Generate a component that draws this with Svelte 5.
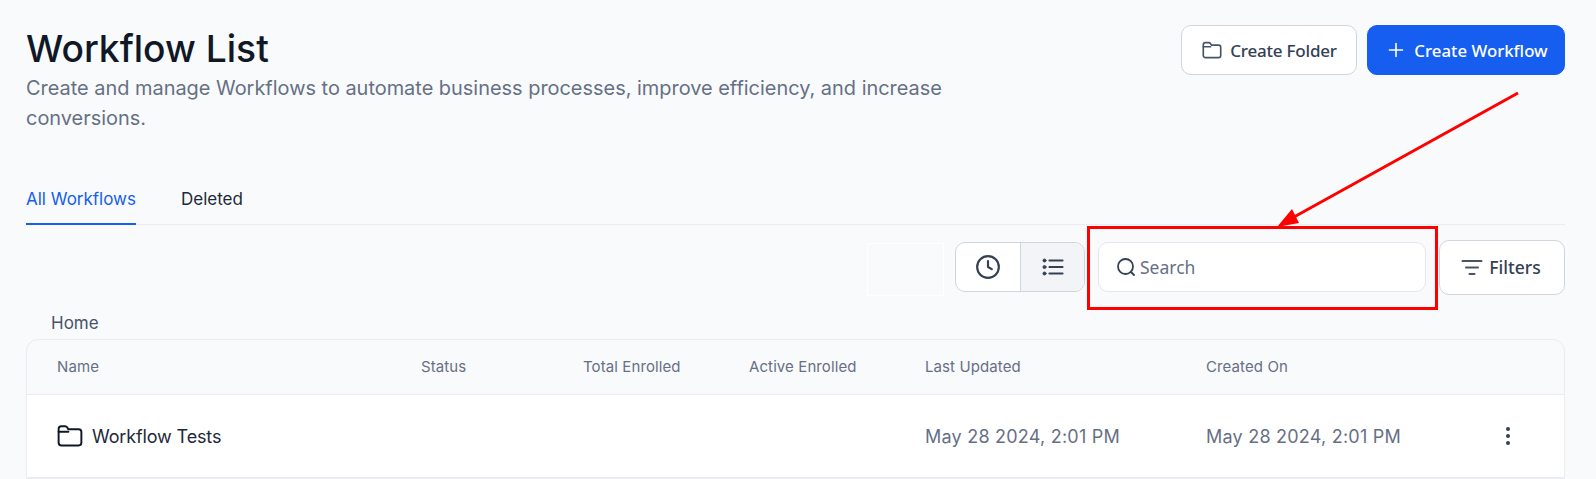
<script>
  const columns = [
    { label: 'Name' },
    { label: 'Status' },
    { label: 'Total Enrolled' },
    { label: 'Active Enrolled' },
    { label: 'Last Updated' },
    { label: 'Created On' },
    { label: '' }
  ];
</script>

<div class="page">
  <header class="head">
    <div class="intro">
      <h1>Workflow List</h1>
      <p>Create and manage Workflows to automate business processes, improve efficiency, and increase conversions.</p>
    </div>
    <div class="actions">
      <button class="btn folder">
        <svg width="22" height="22" viewBox="0 0 24 24" fill="none" stroke="#475467" stroke-width="1.800" stroke-linecap="round" stroke-linejoin="round"><path d="M2.500 6.500c0-1.400 1-2.500 2.400-2.500h3.600c.8 0 1.500.4 1.900 1l1 1.600h7.700c1.400 0 2.400 1.100 2.400 2.500v8.800c0 1.400-1 2.400-2.400 2.400H4.900c-1.400 0-2.400-1-2.400-2.400z"/><path d="M2.500 8.500h8"/></svg>
        Create Folder
      </button>
      <button class="btn primary">
        <svg width="20" height="20" viewBox="0 0 20 20" fill="none" stroke="#fff" stroke-width="1.600" stroke-linecap="round"><path d="M10 3.500v13M3.500 10h13"/></svg>
        Create Workflow
      </button>
    </div>
  </header>

  <nav class="tabs">
    <span class="tab active">All Workflows</span>
    <span class="tab">Deleted</span>
  </nav>

  <div class="toolbar">
    <div class="blank"></div>
    <div class="toggle">
      <span class="seg">
        <svg width="26" height="26" viewBox="0 0 24 24" fill="none" stroke="#344054" stroke-width="2" stroke-linecap="round" stroke-linejoin="round"><circle cx="12" cy="12" r="10"/><path d="M12 6.500V12l3.500 2"/></svg>
      </span>
      <span class="seg on">
        <svg class="listicon" width="24" height="24" viewBox="0 0 24 24" fill="none" stroke="#344054" stroke-width="2.200" stroke-linecap="round"><path d="M8.500 5.500h13M8.500 12h13M8.500 18.500h13"/><circle cx="3.500" cy="5.500" r="1.500" fill="#344054" stroke-width="1"/><circle cx="3.500" cy="12" r="1.500" fill="#344054" stroke-width="1"/><circle cx="3.500" cy="18.500" r="1.500" fill="#344054" stroke-width="1"/></svg>
      </span>
    </div>
    <label class="search">
      <svg width="20" height="20" viewBox="0 0 20 20" fill="none" stroke="#344054" stroke-width="1.800" stroke-linecap="round"><circle cx="9.500" cy="9.500" r="7.500"/><path d="M15 15l3 3"/></svg>
      <input placeholder="Search" />
    </label>
    <button class="btn filters">
      <svg width="24" height="24" viewBox="0 0 24 24" fill="none" stroke="#475467" stroke-width="2" stroke-linecap="round"><path d="M2.500 6h19M6 12.500h12M9.500 19h5"/></svg>
      Filters
    </button>
  </div>

  <div class="crumb">Home</div>

  <section class="table">
    <div class="row headrow">
      {#each columns as c}
        <div>{c.label}</div>
      {/each}
    </div>
    <div class="row body">
      <div class="namecell">
        <svg width="26" height="26" viewBox="0 0 24 24" fill="none" stroke="#101828" stroke-width="1.800" stroke-linecap="round" stroke-linejoin="round"><path d="M1.500 5.500C1.500 4 2.500 3 4 3h3.500c.8 0 1.500.4 1.900 1l1 1.800H20c1.500 0 2.500 1 2.500 2.500v10c0 1.400-1 2.400-2.500 2.400H4c-1.500 0-2.500-1-2.500-2.400z"/><path d="M1.500 8h9"/></svg>
        <span>Workflow Tests</span>
      </div>
      <div></div>
      <div></div>
      <div></div>
      <div class="date">May 28 2024, 2:01 PM</div>
      <div class="date">May 28 2024, 2:01 PM</div>
      <div class="kebab">
        <svg width="6" height="20" viewBox="0 0 6 20" fill="#344054"><circle cx="3" cy="3" r="2"/><circle cx="3" cy="10" r="2"/><circle cx="3" cy="17" r="2"/></svg>
      </div>
    </div>
  </section>

  <div class="redbox"></div>
  <svg class="arrow" width="1596" height="479" viewBox="0 0 1596 479">
    <line x1="1518" y1="93" x2="1294" y2="217" stroke="#ff0000" stroke-width="3"/>
    <polygon points="1277,227 1292,209 1299,223" fill="#ff0000"/>
  </svg>
</div>

<style>
  :global(body) {
    margin: 0;
    background: #f9fafb;
  }
  .page {
    position: relative;
    width: 1596px;
    height: 479px;
    overflow: hidden;
    box-sizing: border-box;
    padding: 25px 31px 0 26px;
    font-family: Inter, sans-serif;
    color: #101828;
  }
  .head {
    display: flex;
    justify-content: space-between;
    align-items: flex-start;
    height: 160px;
  }
  .intro {
    width: 950px;
  }
  h1 {
    margin: 0;
    padding-top: 1px;
    font-size: 37.200px;
    font-weight: 500;
    line-height: 46px;
  }
  p {
    margin: 1px 0 0;
    font-size: 19.930px;
    line-height: 30px;
    color: #667085;
  }
  .actions {
    display: flex;
    gap: 10px;
  }
  .btn {
    display: inline-flex;
    align-items: center;
    justify-content: center;
    gap: 8px;
    box-sizing: border-box;
    height: 50px;
    border-radius: 10px;
    border: 1px solid #d0d5dd;
    background: #fff;
    color: #344054;
    font-family: "Noto Sans", sans-serif;
    font-size: 17px;
    font-weight: 500;
  }
  .folder {
    width: 176px;
    letter-spacing: -0.2px;
    gap: 7px;
  }
  .primary {
    width: 198px;
    background: #155eef;
    border-color: #155eef;
    color: #fff;
    font-size: 16.800px;
    padding-left: 8px;
  }
  .tabs {
    display: flex;
    gap: 45px;
    height: 39px;
    border-bottom: 1px solid #eaecf0;
  }
  .tab {
    font-size: 17px;
    font-weight: 400;
    line-height: 28px;
    color: #1d2939;
    box-sizing: border-box;
    height: 40px;
  }
  .active {
    color: #155eef;
    border-bottom: 2px solid #155eef;
  }
  .toolbar {
    display: flex;
    align-items: center;
    height: 54px;
    margin-top: 15px;
    justify-content: flex-end;
  }
  .blank {
    box-sizing: border-box;
    width: 77px;
    height: 53px;
    border: 1px solid #fff;
    margin: 5px 11px 0 0;
  }
  .toggle {
    display: flex;
    box-sizing: border-box;
    width: 130px;
    height: 50px;
    border: 1px solid #d0d5dd;
    border-radius: 10px;
    background: #fff;
    overflow: hidden;
    margin-right: 13px;
  }
  .seg {
    flex: 1;
    display: flex;
    align-items: center;
    justify-content: center;
  }
  .seg.on {
    background: #f2f4f7;
    border-left: 1px solid #d0d5dd;
  }
  .listicon {
    margin-left: 2px;
  }
  .search {
    display: flex;
    align-items: center;
    gap: 4px;
    box-sizing: border-box;
    width: 328px;
    height: 50px;
    padding: 0 16px 0 17px;
    background: #fff;
    border: 1px solid #e4e7ec;
    border-radius: 10px;
    margin-right: 13px;
  }
  input {
    flex: 1;
    min-width: 0;
    border: 0;
    outline: 0;
    padding: 0;
    background: transparent;
    font-family: "Noto Sans", sans-serif;
    font-size: 17.500px;
  }
  input::placeholder {
    color: #667085;
    opacity: 1;
  }
  .filters {
    width: 126px;
    height: 55px;
    align-self: flex-start;
    font-size: 17.500px;
    gap: 5px;
    padding: 0 3px 2px 0;
  }
  .crumb {
    margin-top: 17px;
    padding-left: 25px;
    font-size: 17px;
    line-height: 24px;
    color: #475467;
  }
  .table {
    margin-top: 4px;
    border: 1px solid #eaecf0;
    border-radius: 12px 12px 0 0;
    overflow: hidden;
  }
  .row {
    display: grid;
    grid-template-columns: 364px 162px 166px 176px 281px 1fr 59px;
    align-items: center;
    padding-left: 30px;
  }
  .headrow {
    box-sizing: border-box;
    height: 55px;
    padding-bottom: 2px;
    font-size: 15px;
    font-weight: 400;
    letter-spacing: 0.1px;
    color: #667085;
    border-bottom: 1px solid #eaecf0;
  }
  .body {
    box-sizing: border-box;
    height: 84px;
    background: #fff;
    border-bottom: 2px solid #eaecf0;
    font-size: 18px;
  }
  .namecell {
    display: flex;
    align-items: center;
    gap: 9px;
    color: #1d2939;
    letter-spacing: -0.14px;
  }
  .date {
    color: #667085;
    letter-spacing: 0.23px;
  }
  .kebab {
    display: flex;
    align-items: center;
  }
  .redbox {
    position: absolute;
    left: 1087px;
    top: 226px;
    width: 351px;
    height: 84px;
    box-sizing: border-box;
    border: 3px solid #ff0000;
    pointer-events: none;
  }
  .arrow {
    position: absolute;
    left: 0;
    top: 0;
    pointer-events: none;
  }
</style>
